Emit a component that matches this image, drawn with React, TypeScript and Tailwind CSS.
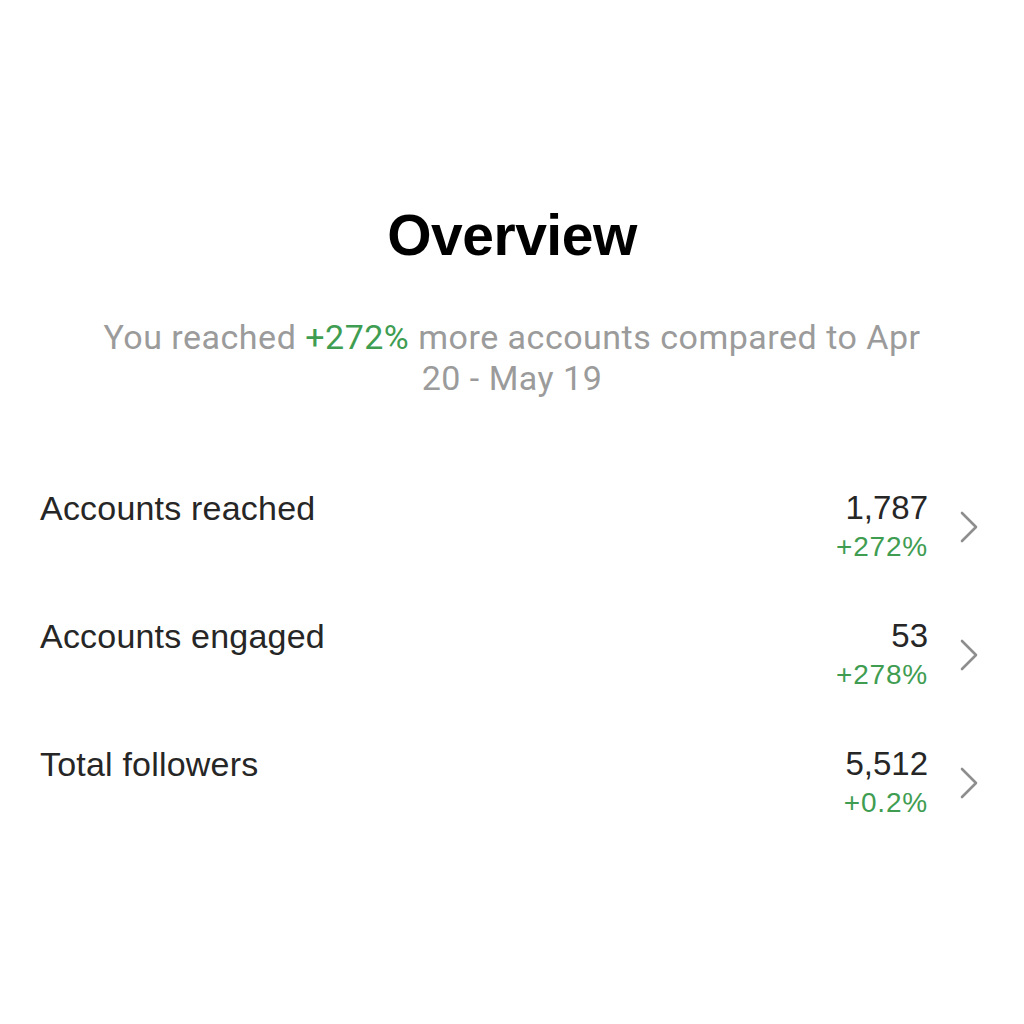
import React from 'react'

interface Metric {
  label: string
  value: string
  change: string
}

const metrics: Metric[] = [
  { label: 'Accounts reached', value: '1,787', change: '+272%' },
  { label: 'Accounts engaged', value: '53', change: '+278%' },
  { label: 'Total followers', value: '5,512', change: '+0.2%' },
]

const Chevron = () => (
  <svg width="22" height="34" viewBox="0 0 22 34" fill="none" className="text-[#8e8e8e]">
    <path d="M4 3 L18 17 L4 31" stroke="currentColor" strokeWidth="2.6" strokeLinecap="round" strokeLinejoin="round" />
  </svg>
)

export default function App() {
  return (
    <div className="w-[1024px] h-[1024px] bg-white font-['Liberation_Sans',Arial,sans-serif] text-[#262626]">
      <div className="pt-[207px] flex flex-col items-center">
        <h1 className="text-[57px] leading-none font-bold tracking-[-0.5px] text-black">Overview</h1>
        <p className="mt-[53px] w-[850px] text-center font-['Roboto',sans-serif] text-[34px] leading-[41px] tracking-[0.5px] text-[#9b9b9b]">
          You reached <span className="text-[#3f9d52]">+272%</span> more accounts compared to Apr 20 - May 19
        </p>
      </div>

      <div className="mt-[89px] pl-[40px] pr-[44px] flex flex-col gap-[51px]">
        {metrics.map((m) => (
          <div key={m.label} className="flex items-start justify-between">
            <span className="text-[34px] leading-[40px] tracking-[0.2px]">{m.label}</span>
            <div className="flex items-center gap-[30px]">
              <div className="flex flex-col items-end">
                <span className="text-[33px] leading-[40px]">{m.value}</span>
                <span className="text-[28px] leading-[37px] tracking-[0.8px] text-[#3f9d52]">{m.change}</span>
              </div>
              <Chevron />
            </div>
          </div>
        ))}
      </div>
    </div>
  )
}
